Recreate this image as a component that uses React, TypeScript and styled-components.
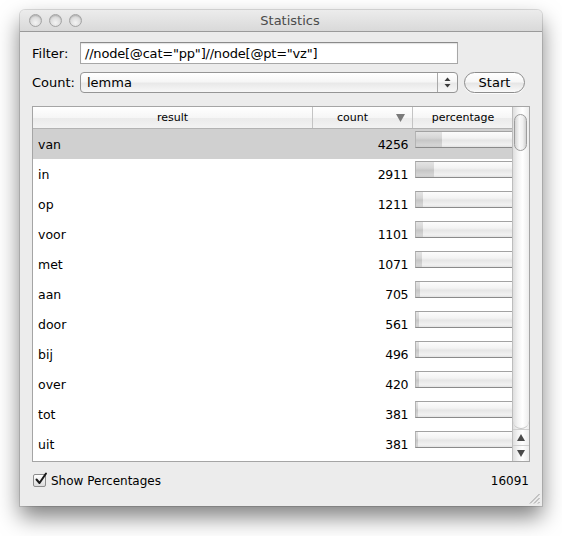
import styled, { createGlobalStyle } from "styled-components";

const GlobalStyle = createGlobalStyle`
  html, body {
    margin: 0;
    padding: 0;
    background: #ffffff;
  }
  body {
    font-family: "DejaVu Sans", "Lucida Grande", sans-serif;
    font-size: 12px;
    color: #000;
  }
`;

const rows = [
  { word: "van", count: 4256 },
  { word: "in", count: 2911 },
  { word: "op", count: 1211 },
  { word: "voor", count: 1101 },
  { word: "met", count: 1071 },
  { word: "aan", count: 705 },
  { word: "door", count: 561 },
  { word: "bij", count: 496 },
  { word: "over", count: 420 },
  { word: "tot", count: 381 },
  { word: "uit", count: 381 },
];
const total = 16091;

const Stage = styled.div`
  width: 562px;
  height: 536px;
  box-sizing: border-box;
  padding: 10px 20px 30px 20px;
`;

const Window = styled.div`
  position: relative;
  width: 522px;
  height: 496px;
  display: flex;
  flex-direction: column;
  background: #ececec;
  border-radius: 5px 5px 0 0;
  box-shadow: 0 0 0 1px rgba(0, 0, 0, 0.12), 0 11px 22px rgba(0, 0, 0, 0.5);
`;

const TitleBar = styled.div`
  height: 21px;
  display: grid;
  grid-template-columns: 1fr auto 1fr;
  align-items: center;
  background: linear-gradient(#ececec, #d9d9d9);
  border-bottom: 1px solid #9b9b9b;
  border-radius: 5px 5px 0 0;
`;

const Lights = styled.div`
  display: flex;
  gap: 7px;
  padding-left: 9px;
`;

const Light = styled.span`
  width: 11px;
  height: 11px;
  border-radius: 50%;
  border: 1px solid #a3a3a3;
  background: radial-gradient(circle at 50% 70%, #f4f4f4 0%, #dcdcdc 55%, #c4c4c4 100%);
  box-shadow: inset 0 1px 1px rgba(0, 0, 0, 0.15);
`;

const Title = styled.div`
  margin-left: 18px;
  font-size: 13px;
  color: #4b4b4b;
`;

const Content = styled.div`
  flex: 1;
  display: flex;
  flex-direction: column;
  padding: 10px 12px 0 12px;
`;

const FormRow = styled.div<{ $gap?: number }>`
  display: flex;
  align-items: center;
  margin-bottom: ${(p) => p.$gap ?? 0}px;
`;

const Label = styled.div`
  width: 48px;
  font-size: 13px;
`;

const TextField = styled.div`
  width: 378px;
  height: 22px;
  box-sizing: border-box;
  border: 1px solid #a7a7a7;
  border-top-color: #8a8a8a;
  background: #fff;
  box-shadow: inset 0 1px 1px rgba(0, 0, 0, 0.12);
  padding: 0 4px;
  display: flex;
  align-items: center;
  font-size: 13px;
  letter-spacing: -0.2px;
`;

const Popup = styled.div`
  width: 378px;
  height: 21px;
  box-sizing: border-box;
  border: 1px solid #959595;
  border-radius: 4px;
  background: linear-gradient(#ffffff 0%, #f6f6f6 45%, #e9e9e9 55%, #f7f7f7 100%);
  display: flex;
  align-items: center;
  font-size: 13px;
`;

const PopupText = styled.div`
  flex: 1;
  padding-left: 6px;
`;

const PopupArrows = styled.div`
  width: 19px;
  height: 100%;
  border-left: 1px solid #a9a9a9;
  display: flex;
  align-items: center;
  justify-content: center;
`;

const PushButton = styled.div`
  margin-left: 6px;
  width: 61px;
  height: 21px;
  box-sizing: border-box;
  border: 1px solid #8c8c8c;
  border-radius: 11px;
  background: linear-gradient(#ffffff 0%, #f7f7f7 45%, #e6e6e6 55%, #fafafa 100%);
  box-shadow: 0 1px 0 rgba(255, 255, 255, 0.8);
  display: flex;
  align-items: center;
  justify-content: center;
  font-size: 13px;
`;

const TableFrame = styled.div`
  margin-top: 13px;
  width: 498px;
  height: 356px;
  box-sizing: border-box;
  border: 1px solid #a5a5a5;
  background: #fff;
  display: flex;
  overflow: hidden;
`;

const ListArea = styled.div`
  flex: 1;
  display: flex;
  flex-direction: column;
  overflow: hidden;
`;

const Columns = "280px 100px 100px";

const Header = styled.div`
  height: 22px;
  flex: none;
  box-sizing: border-box;
  display: grid;
  grid-template-columns: ${Columns};
  border-bottom: 1px solid #b3b3b3;
  background: linear-gradient(#ffffff 0%, #f6f6f6 50%, #ebebeb 55%, #f3f3f3 100%);
`;

const HeaderCell = styled.div<{ $last?: boolean }>`
  position: relative;
  display: flex;
  align-items: center;
  justify-content: center;
  font-size: 11px;
  border-right: ${(p) => (p.$last ? "none" : "1px solid #c4c4c4")};
`;

const SortLabel = styled.span`
  margin-right: 20px;
`;

const SortMark = styled.svg`
  position: absolute;
  right: 7px;
  top: 7px;
`;

const Row = styled.div<{ $selected?: boolean }>`
  height: 30px;
  flex: none;
  display: grid;
  grid-template-columns: ${Columns};
  background: ${(p) => (p.$selected ? "#d0d0d0" : "#ffffff")};
`;

const WordCell = styled.div`
  display: flex;
  align-items: center;
  padding-left: 5px;
  font-size: 12.5px;
`;

const CountCell = styled.div`
  display: flex;
  align-items: center;
  justify-content: flex-end;
  padding-right: 5px;
  font-size: 12.5px;
  letter-spacing: -0.4px;
`;

const PercentCell = styled.div`
  padding: 2px 0 0 2px;
`;

const Level = styled.div`
  height: 17px;
  box-sizing: border-box;
  border-top: 1px solid #a2a2a2;
  border-bottom: 1px solid #8a8a8a;
  border-left: 1px solid #b4b4b4;
  background: linear-gradient(#fcfcfc 0%, #f3f3f3 40%, #e6e6e6 55%, #f1f1f1 85%, #e2e2e2 100%);
  display: flex;
`;

const LevelFill = styled.div`
  height: 100%;
  background: linear-gradient(#e4e4e4 0%, #d6d6d6 40%, #c6c6c6 55%, #d4d4d4 85%, #cdcdcd 100%);
`;

const ScrollBar = styled.div`
  width: 16px;
  flex: none;
  display: flex;
  flex-direction: column;
  border-left: 1px solid #bdbdbd;
  background: linear-gradient(to right, #dedede, #f3f3f3 30%, #ffffff 60%, #ececec);
`;

const Track = styled.div`
  flex: 1;
  position: relative;
  border-bottom: 1px solid #c4c4c4;
  border-radius: 0 0 8px 8px;
`;

const Thumb = styled.div`
  position: absolute;
  top: 7px;
  left: 1px;
  width: 13px;
  height: 37px;
  box-sizing: border-box;
  border: 1px solid #9d9d9d;
  border-radius: 7px;
  background: linear-gradient(to right, #d4d4d4, #f8f8f8 40%, #f0f0f0 70%, #cfcfcf);
`;

const ArrowButton = styled.div`
  height: 16px;
  flex: none;
  display: flex;
  align-items: center;
  justify-content: center;
  border-top: 1px solid #d0d0d0;
  box-sizing: border-box;
`;

const Footer = styled.div`
  height: 38px;
  display: flex;
  align-items: center;
  padding: 0 1px;
  font-size: 12px;
`;

const CheckBox = styled.div`
  position: relative;
  width: 13px;
  height: 13px;
  flex: none;
  box-sizing: border-box;
  border: 1px solid #8c8c8c;
  border-radius: 2px;
  background: linear-gradient(#ffffff, #dcdcdc);
  margin-right: 5px;
  margin-top: -2px;
`;

const CheckMark = styled.svg`
  position: absolute;
  left: 0px;
  top: -3px;
`;

const CheckLabel = styled.span`
  font-size: 12px;
`;

const Total = styled.span`
  margin-left: auto;
`;

const Grip = styled.svg`
  position: absolute;
  right: 2px;
  bottom: 2px;
`;

export default function App() {
  return (
    <>
      <GlobalStyle />
      <Stage>
        <Window>
          <TitleBar>
            <Lights>
              <Light />
              <Light />
              <Light />
            </Lights>
            <Title>Statistics</Title>
            <div />
          </TitleBar>
          <Content>
            <FormRow $gap={8}>
              <Label>Filter:</Label>
              <TextField>//node[@cat="pp"]//node[@pt="vz"]</TextField>
            </FormRow>
            <FormRow>
              <Label>Count:</Label>
              <Popup>
                <PopupText>lemma</PopupText>
                <PopupArrows>
                  <svg width="7" height="11" viewBox="0 0 7 11">
                    <path d="M3.5 0.5 L6.5 4 L0.5 4 Z" fill="#3a3a3a" />
                    <path d="M0.5 7 L6.5 7 L3.5 10.5 Z" fill="#3a3a3a" />
                  </svg>
                </PopupArrows>
              </Popup>
              <PushButton>Start</PushButton>
            </FormRow>
            <TableFrame>
              <ListArea>
                <Header>
                  <HeaderCell>result</HeaderCell>
                  <HeaderCell>
                    <SortLabel>count</SortLabel>
                    <SortMark width="9" height="8" viewBox="0 0 9 8">
                      <path d="M0 0 L9 0 L4.5 8 Z" fill="#7a7a7a" />
                    </SortMark>
                  </HeaderCell>
                  <HeaderCell $last>percentage</HeaderCell>
                </Header>
                {rows.map((r, i) => (
                  <Row key={r.word} $selected={i === 0}>
                    <WordCell>{r.word}</WordCell>
                    <CountCell>{r.count}</CountCell>
                    <PercentCell>
                      <Level>
                        <LevelFill style={{ width: `${(r.count / total) * 100}%` }} />
                      </Level>
                    </PercentCell>
                  </Row>
                ))}
              </ListArea>
              <ScrollBar>
                <Track>
                  <Thumb />
                </Track>
                <ArrowButton>
                  <svg width="8" height="7" viewBox="0 0 8 7">
                    <path d="M4 0 L8 7 L0 7 Z" fill="#4a4a4a" />
                  </svg>
                </ArrowButton>
                <ArrowButton>
                  <svg width="8" height="7" viewBox="0 0 8 7">
                    <path d="M0 0 L8 0 L4 7 Z" fill="#4a4a4a" />
                  </svg>
                </ArrowButton>
              </ScrollBar>
            </TableFrame>
            <Footer>
              <CheckBox>
                <CheckMark width="14" height="14" viewBox="0 0 14 14">
                  <path d="M2.5 7.5 L5.5 11 L12 1.5" fill="none" stroke="#1a1a1a" strokeWidth="2" strokeLinecap="round" strokeLinejoin="round" />
                </CheckMark>
              </CheckBox>
              <CheckLabel>Show Percentages</CheckLabel>
              <Total>{total}</Total>
            </Footer>
          </Content>
          <Grip width="11" height="11" viewBox="0 0 11 11">
            <path d="M10.5 1 L1 10.5 M10.5 5 L5 10.5 M10.5 9 L9 10.5" stroke="#9a9a9a" strokeWidth="1" />
          </Grip>
        </Window>
      </Stage>
    </>
  );
}
